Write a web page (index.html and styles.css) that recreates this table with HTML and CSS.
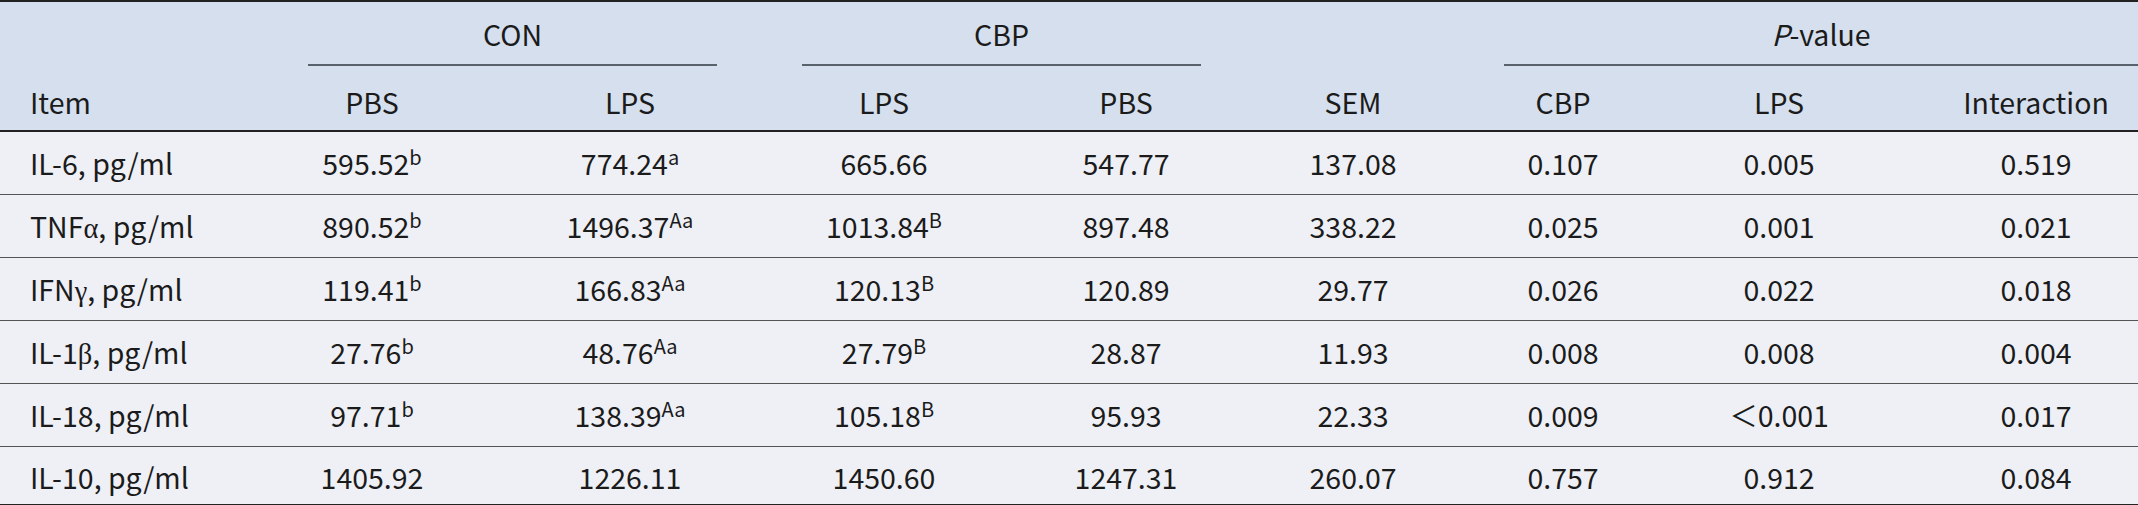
FILE: index.html
```html
<!DOCTYPE html>
<html>
<head>
<meta charset="utf-8">
<link rel="stylesheet" href="styles.css">
</head>
<body>
<table class="tbl">
  <colgroup>
    <col class="c-item"><col class="c1"><col class="c2"><col class="c3"><col class="c4"><col class="c5"><col class="c6"><col class="c7"><col class="c8">
  </colgroup>
  <thead>
    <tr class="hr1">
      <th></th>
      <th colspan="2"><div class="span span-con">CON</div></th>
      <th colspan="2"><div class="span span-cbp">CBP</div></th>
      <th></th>
      <th colspan="3"><div class="span span-p"><i>P</i>-value</div></th>
    </tr>
    <tr class="hr2">
      <th class="left">Item</th>
      <th>PBS</th>
      <th>LPS</th>
      <th>LPS</th>
      <th>PBS</th>
      <th>SEM</th>
      <th>CBP</th>
      <th>LPS</th>
      <th>Interaction</th>
    </tr>
  </thead>
  <tbody>
    <tr>
      <td class="left">IL-6, pg/ml</td>
      <td>595.52<sup>b</sup></td>
      <td>774.24<sup>a</sup></td>
      <td>665.66</td>
      <td>547.77</td>
      <td>137.08</td>
      <td>0.107</td>
      <td>0.005</td>
      <td>0.519</td>
    </tr>
    <tr>
      <td class="left">TNF<span class="gr">α</span>, pg/ml</td>
      <td>890.52<sup>b</sup></td>
      <td>1496.37<sup>Aa</sup></td>
      <td>1013.84<sup>B</sup></td>
      <td>897.48</td>
      <td>338.22</td>
      <td>0.025</td>
      <td>0.001</td>
      <td>0.021</td>
    </tr>
    <tr>
      <td class="left">IFN<span class="gr">γ</span>, pg/ml</td>
      <td>119.41<sup>b</sup></td>
      <td>166.83<sup>Aa</sup></td>
      <td>120.13<sup>B</sup></td>
      <td>120.89</td>
      <td>29.77</td>
      <td>0.026</td>
      <td>0.022</td>
      <td>0.018</td>
    </tr>
    <tr>
      <td class="left">IL-1<span class="gr">β</span>, pg/ml</td>
      <td>27.76<sup>b</sup></td>
      <td>48.76<sup>Aa</sup></td>
      <td>27.79<sup>B</sup></td>
      <td>28.87</td>
      <td>11.93</td>
      <td>0.008</td>
      <td>0.008</td>
      <td>0.004</td>
    </tr>
    <tr>
      <td class="left">IL-18, pg/ml</td>
      <td>97.71<sup>b</sup></td>
      <td>138.39<sup>Aa</sup></td>
      <td>105.18<sup>B</sup></td>
      <td>95.93</td>
      <td>22.33</td>
      <td>0.009</td>
      <td>＜0.001</td>
      <td>0.017</td>
    </tr>
    <tr class="last">
      <td class="left">IL-10, pg/ml</td>
      <td>1405.92</td>
      <td>1226.11</td>
      <td>1450.60</td>
      <td>1247.31</td>
      <td>260.07</td>
      <td>0.757</td>
      <td>0.912</td>
      <td>0.084</td>
    </tr>
  </tbody>
</table>
</body>
</html>
```

FILE: styles.css
```css
html, body {
  margin: 0;
  padding: 0;
  background: #eef0f6;
}
.tbl {
  width: 2138px;
  table-layout: fixed;
  border-collapse: collapse;
  font-family: "Noto Sans CJK SC", "Noto Sans", sans-serif;
  font-size: 28.5px;
  font-weight: 400;
  color: #1b1b1b;
  border-top: 2px solid #222;
}
.c-item { width: 204px; }
.c1 { width: 336px; }
.c2 { width: 180px; }
.c3 { width: 328px; }
.c4 { width: 156px; }
.c5 { width: 298px; }
.c6 { width: 122px; }
.c7 { width: 310px; }
.c8 { width: 204px; }
th, td {
  padding: 0;
  text-align: center;
  font-weight: 400;
  white-space: nowrap;
  overflow: hidden;
}
.left { text-align: left; padding-left: 30px; }
thead { background: #d5dfed; }
.hr1 th { height: 64px; line-height: 64px; vertical-align: bottom; padding: 0; }
.span {
  border-bottom: 2px solid #59616c;
  height: 62px;
  line-height: 64px;
  box-sizing: content-box;
}
.span-con { margin-left: 104px; margin-right: 3px; }
.span-cbp { margin-left: 82px; margin-right: 3px; }
.span-p { margin-left: 2px; margin-right: 0; }
.hr2 th {
  height: 56px;
  padding-top: 8px;
  line-height: 56px;
  vertical-align: middle;
  border-bottom: 2px solid #222;
}
tbody tr { height: 63px; }
tbody td {
  height: 60px;
  line-height: 58px;
  padding-top: 2px;
  border-bottom: 1px solid #555;
  vertical-align: top;
}
tbody tr.last { height: 58px; }
tbody tr.last td {
  height: 48px;
  padding-top: 4px;
  line-height: 52px;
  border-bottom: 2px solid #222;
}
sup {
  font-size: 20px;
  line-height: 0;
  vertical-align: 10px;
}
.gr {
  font-family: "Liberation Serif", "DejaVu Serif", serif;
  line-height: 0;
}
```
